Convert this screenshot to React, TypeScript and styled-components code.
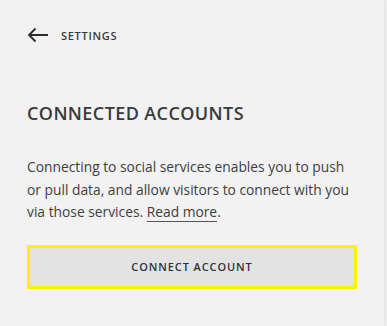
import styled, { createGlobalStyle } from "styled-components";

const GlobalStyle = createGlobalStyle`
  html, body {
    margin: 0;
    padding: 0;
    background: #f2f2f2;
  }
  body {
    font-family: "Open Sans", "Liberation Sans", Arial, sans-serif;
    color: #3e3e3e;
    -webkit-font-smoothing: antialiased;
  }
`;

const Panel = styled.div`
  width: 384px;
  height: 326px;
  box-sizing: border-box;
  padding: 0 27px;
  background: #f2f2f2;
  box-shadow: 1px 0 3px rgba(0, 0, 0, 0.08);
`;

const BackBar = styled.div`
  display: flex;
  align-items: center;
  gap: 12px;
  height: 70px;
`;

const BackLabel = styled.span`
  font-size: 11px;
  font-weight: 600;
  letter-spacing: 0.7px;
  color: #3a3a3a;
`;

const Heading = styled.h2`
  margin: 31px 0 0;
  font-size: 18px;
  font-weight: 600;
  letter-spacing: 0.4px;
  line-height: 24px;
  color: #3a3a3a;
`;

const Description = styled.p`
  margin: 31px 0 0;
  font-size: 13.8px;
  line-height: 22.5px;
  color: #3e3e3e;
`;

const Link = styled.a`
  color: inherit;
  text-decoration: underline;
  text-decoration-color: #555;
  text-decoration-thickness: 1px;
  text-underline-offset: 4px;
`;

const ConnectButton = styled.button`
  display: block;
  width: 330px;
  height: 44px;
  margin-top: 21px;
  box-sizing: border-box;
  border: 3px solid #fff200;
  background: #e3e3e3;
  font-family: inherit;
  font-size: 11px;
  font-weight: 600;
  letter-spacing: 0.9px;
  color: #333;
`;

const ArrowIcon = () => (
  <svg width="22" height="16" viewBox="0 0 22 16" fill="none">
    <path d="M21 8H2M8.5 1.5L2 8l6.5 6.5" stroke="#2b2b2b" strokeWidth="1.8" />
  </svg>
);

export default function App() {
  return (
    <>
      <GlobalStyle />
      <Panel>
        <BackBar>
          <ArrowIcon />
          <BackLabel>SETTINGS</BackLabel>
        </BackBar>
        <Heading>CONNECTED ACCOUNTS</Heading>
        <Description>
          Connecting to social services enables you to push or pull data, and
          allow visitors to connect with you via those services.{" "}
          <Link href="#">Read more</Link>.
        </Description>
        <ConnectButton>CONNECT ACCOUNT</ConnectButton>
      </Panel>
    </>
  );
}
